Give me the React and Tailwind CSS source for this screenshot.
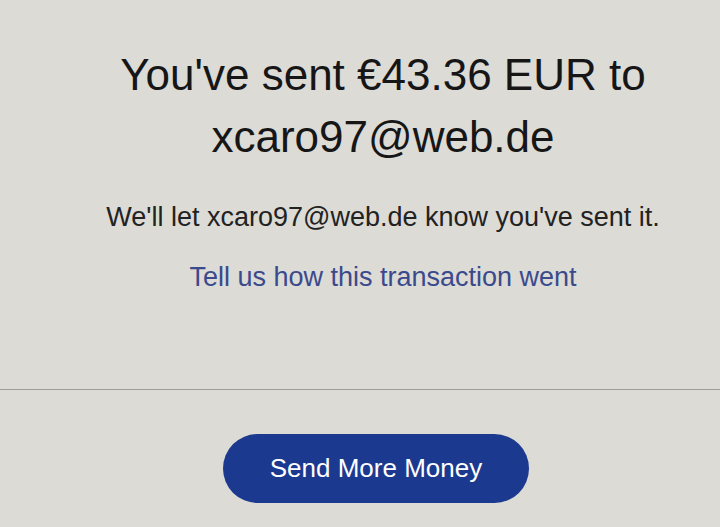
export default function App() {
  return (
    <div className="w-[720px] h-[527px] overflow-hidden bg-[#dcdbd6] text-[#1a1a1a]" style={{ fontFamily: '"Liberation Sans", Arial, sans-serif' }}>
      <div className="flex flex-col items-center pt-[44px] pl-[46px]">
        <h1 className="text-[44px] leading-[62px] text-center text-[#161616]">
          You've sent €43.36 EUR to
          <br />
          xcaro97@web.de
        </h1>
        <p className="mt-[33px] text-[27px] leading-[32px] text-[#222]">
          We'll let xcaro97@web.de know you've sent it.
        </p>
        <a className="mt-[28px] text-[27px] leading-[32px] text-[#3b4a8c]">
          Tell us how this transaction went
        </a>
      </div>
      <div className="mt-[96px] h-px bg-[#9d9d9a]" />
      <div className="flex justify-center pl-[32px] mt-[44px]">
        <button className="w-[306px] h-[69px] rounded-full bg-[#1b3a8f] text-white text-[26px]">
          Send More Money
        </button>
      </div>
    </div>
  );
}
